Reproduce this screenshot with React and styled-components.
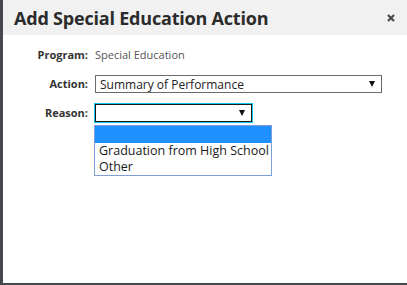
import styled, { createGlobalStyle } from "styled-components";

const GlobalStyle = createGlobalStyle`
  html, body {
    margin: 0;
    padding: 0;
    background: #45494d;
    font-family: "Open Sans", "Liberation Sans", sans-serif;
  }
`

const Dialog = styled.div`
  margin-left: 3px;
  width: 404px;
  height: 283px;
  background: #ffffff;
  display: flex;
  flex-direction: column;
`

const Header = styled.div`
  height: 35px;
  background: #f1f1f1;
  display: flex;
  align-items: center;
  justify-content: space-between;
  padding: 0 11px 0 11px;
  box-sizing: border-box;
  h2 {
    margin: 0;
    font-size: 18px;
    font-weight: 700;
    color: #2b2b2b;
    letter-spacing: -0.2px;
  }
`

const Close = styled.button`
  border: none;
  background: none;
  padding: 0;
  width: 10px;
  height: 10px;
  display: flex;
  align-items: center;
  justify-content: center;
`

const Form = styled.div`
  display: grid;
  grid-template-columns: 85px 1fr;
  column-gap: 7px;
  row-gap: 11px;
  padding-top: 11px;
  align-items: center;
`

const Label = styled.div`
  text-align: right;
  font-size: 11px;
  font-weight: 700;
  color: #333;
  line-height: 18px;
`

const Value = styled.div`
  font-size: 11px;
  color: #555;
  line-height: 18px;
`

const Select = styled.div`
  position: relative;
  width: ${(p) => p.width}px;
  height: 18px;
  box-sizing: border-box;
  border: 1px solid ${(p) => (p.focused ? "#1b1b1b" : "#6b6b6b")};
  outline: ${(p) => (p.focused ? "1px solid #10c4f0" : "none")};
  display: flex;
  align-items: center;
  justify-content: space-between;
  padding: 0 6px 0 4px;
  font-size: 12px;
  color: #222;
`

const Arrow = styled.span`
  width: 0;
  height: 0;
  border-left: 3.5px solid transparent;
  border-right: 3.5px solid transparent;
  border-top: 6px solid #111;
`

const List = styled.div`
  position: absolute;
  left: -2px;
  top: 20px;
  width: 178px;
  box-sizing: border-box;
  border: 1px solid #7d9fd6;
  background: #ffffff;
  z-index: 2;
`

const Option = styled.div`
  height: ${(p) => (p.selected ? 17 : 16)}px;
  line-height: 16px;
  padding-left: 4px;
  font-size: 12.5px;
  color: #1a1a1a;
  white-space: nowrap;
  background: ${(p) => (p.selected ? "#1e90ff" : "transparent")};
`

function App() {
  const reasons = ["", "Graduation from High School", "Other"]

  return (
    <>
      <GlobalStyle />
      <Dialog>
        <Header>
          <h2>Add Special Education Action</h2>
          <Close aria-label="close">
            <svg width="8" height="8" viewBox="0 0 8 8">
              <path d="M1 1L7 7M7 1L1 7" stroke="#4a4a4a" strokeWidth="2.2" />
            </svg>
          </Close>
        </Header>
        <Form>
          <Label>Program:</Label>
          <Value>Special Education</Value>
          <Label>Action:</Label>
          <Select width={287}>
            <span>Summary of Performance</span>
            <Arrow />
          </Select>
          <Label>Reason:</Label>
          <Select width={157} focused>
            <span></span>
            <Arrow />
            <List>
              {reasons.map((r, i) => (
                <Option key={i} selected={i === 0}>{r}</Option>
              ))}
            </List>
          </Select>
        </Form>
      </Dialog>
    </>
  )
}

export default App;
